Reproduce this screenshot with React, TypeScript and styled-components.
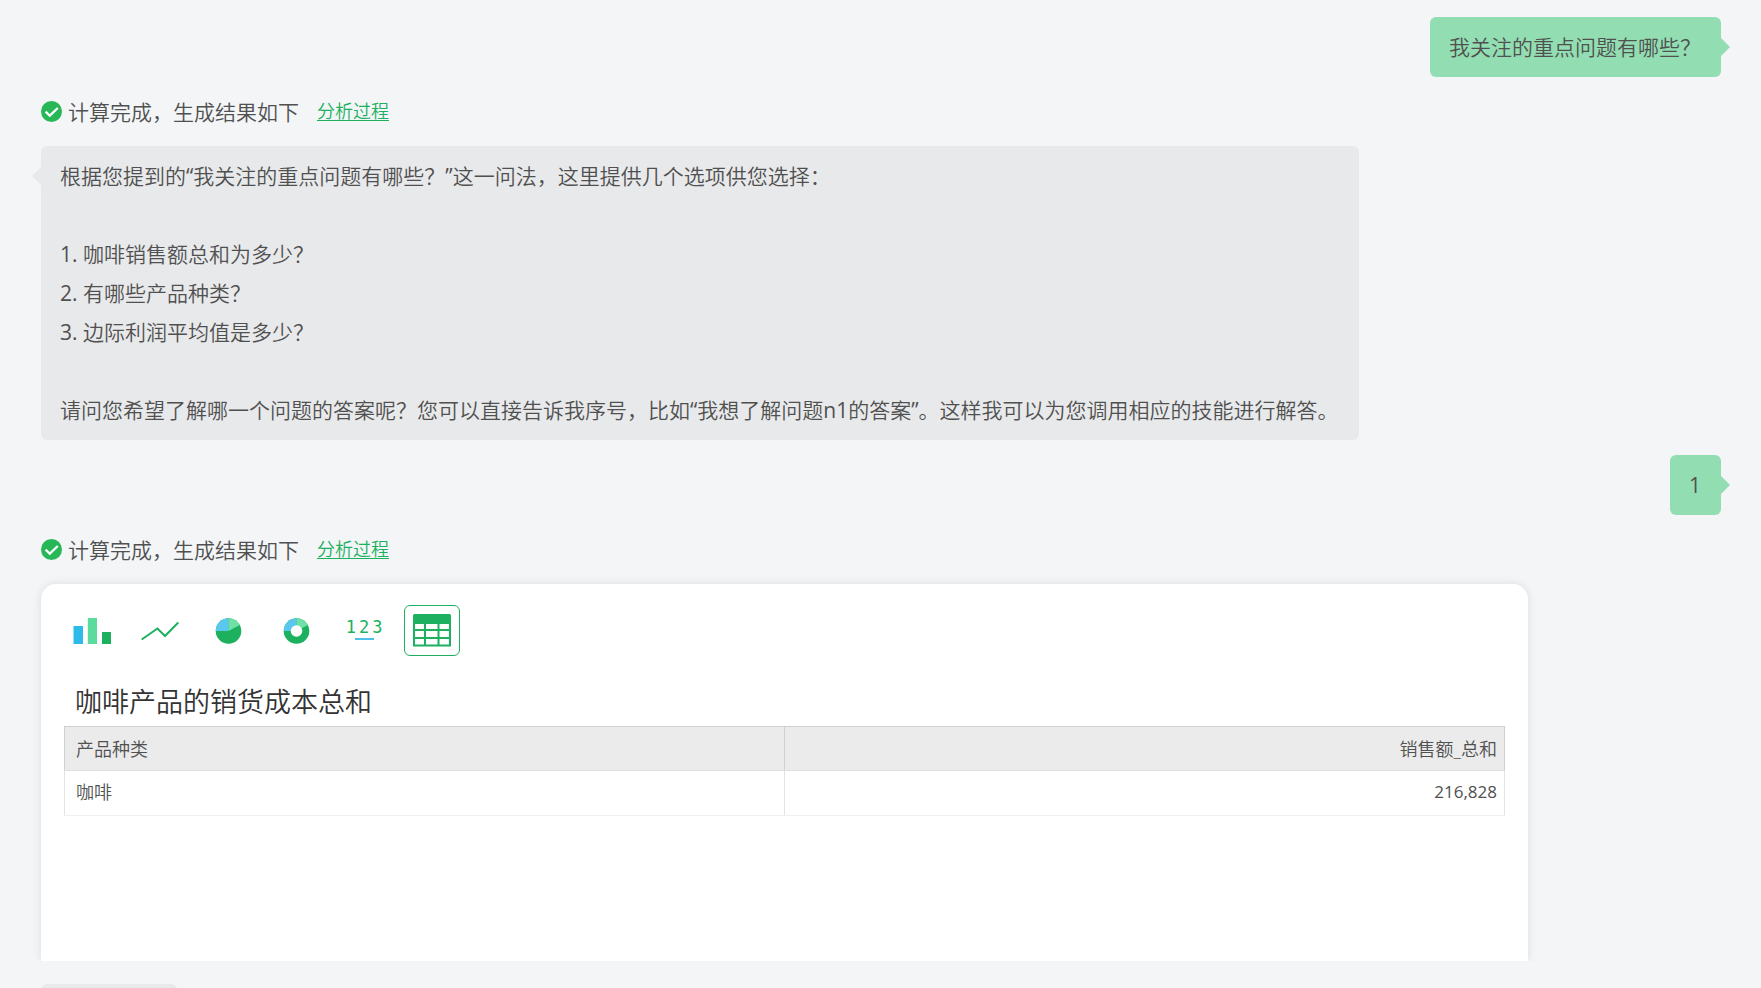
import React from "react";
import styled, { createGlobalStyle } from "styled-components";

const GlobalStyle = createGlobalStyle`
  * { box-sizing: border-box; }
  body {
    margin: 0;
    background: #f3f5f7;
    color: #505050;
    font-family: "Open Sans", "Noto Sans CJK SC", sans-serif;
    font-weight: 350;
    font-size: 21px;
  }
`;

const Page = styled.main`
  display: flex;
  flex-direction: column;
  height: 100vh;
  overflow: hidden;
  padding: 17px 40px 0 41px;
`;

const Bubble = styled.div<{ $side: "user" | "bot" }>`
  position: relative;
  flex: none;
  align-self: ${(p) => (p.$side === "user" ? "flex-end" : "flex-start")};
  padding: ${(p) => (p.$side === "user" ? "11px 20px 10px 19px" : "11px 20px 10px 19px")};
  line-height: 39px;
  border-radius: 6px;
  background: ${(p) => (p.$side === "user" ? "#92deb2" : "#e8e9eb")};

  &::after {
    content: "";
    position: absolute;
    top: 21px;
    ${(p) => (p.$side === "user" ? "left: 100%" : "right: 100%")};
    border: 9px solid transparent;
    border-width: ${(p) => (p.$side === "user" ? "9px 0 9px 9px" : "9px 9px 9px 0")};
    ${(p) =>
      p.$side === "user"
        ? "border-left-color: #92deb2"
        : "border-right-color: #e8e9eb"};
  }
`;

const Latin = styled.span`
  font-weight: 400;
`;

const Line = styled.p`
  margin: 0;
`;

const Options = styled.ol`
  list-style: none;
  margin: 39px 0;
  padding: 0;
`;

const StatusRow = styled.div`
  display: flex;
  align-items: center;
  flex: none;
  height: 69px;
`;

const StatusText = styled.span`
  margin: 0 18px 0 6px;
  padding-bottom: 2px;
`;

const ProcessLink = styled.a`
  padding-bottom: 4px;
  font-size: 18px;
  color: #1db15f;
  text-decoration: underline;
  text-underline-offset: 2px;
`;

const Card = styled.section`
  flex: none;
  height: 377px;
  margin-right: 193px;
  padding: 21px 23px 0;
  background: #fff;
  border-radius: 15px 15px 0 0;
  box-shadow: 0 0 10px rgba(0, 0, 0, 0.1);
  clip-path: inset(-10px -10px 0 -10px);
`;

const Toolbar = styled.div`
  display: flex;
  gap: 12px;
`;

const ChartButton = styled.button<{ $active?: boolean }>`
  display: flex;
  align-items: center;
  justify-content: center;
  width: 56px;
  height: 51px;
  padding: 0;
  background: #fff;
  border: 1px solid ${(p) => (p.$active ? "#1db15f" : "transparent")};
  border-radius: 6px;
`;

const NumberCard = styled.span`
  display: flex;
  flex-direction: column;
  align-items: center;
  gap: 1px;
  padding-bottom: 4px;
  color: #1db15f;
  font: 400 17px/20px "DejaVu Sans Mono", monospace;
`;

const Digits = styled.span`
  display: flex;
  gap: 3px;
`;

const Underline = styled.span`
  width: 19px;
  height: 2px;
  background: #4fc0e8;
`;

const Title = styled.h2`
  margin: 26px 0 4px 11px;
  color: #333;
  font-size: 27px;
  font-weight: 350;
  line-height: 40px;
`;

const DataTable = styled.table`
  width: 100%;
  table-layout: fixed;
  border-collapse: collapse;
  font-size: 18px;
  line-height: 26px;
`;

const HeadCell = styled.th<{ $right?: boolean }>`
  height: 44px;
  padding: 0 7px 0 11px;
  background: #ebebeb;
  border: 1px solid #cfcfcf;
  border-bottom-color: #e0e0e0;
  font-weight: 350;
  text-align: ${(p) => (p.$right ? "right" : "left")};
`;

const Cell = styled.td<{ $numeric?: boolean }>`
  height: 45px;
  padding: 0 7px 2px 11px;
  border: 1px solid #e3e3e3;
  border-bottom-color: #f0f0f0;
  ${(p) => p.$numeric && "text-align: right; font-size: 17px; font-weight: 400;"}
`;

const NextBubble = styled.div`
  flex: none;
  width: 136px;
  height: 60px;
  margin-top: 23px;
  border-radius: 6px;
  background: #e8e9eb;
`;

const Spacer = styled.div`
  flex: none;
  height: 15px;
`;

const CheckIcon = () => (
  <svg width="21" height="21" viewBox="0 0 21 21" aria-hidden="true">
    <circle cx="10.5" cy="10.5" r="10.5" fill="#27b757" />
    <path d="M4.6 10.6 8.8 14.7 16.8 7" fill="none" stroke="#fff" strokeWidth="2.3" />
  </svg>
);

const Status = () => (
  <StatusRow>
    <CheckIcon />
    <StatusText>计算完成，生成结果如下</StatusText>
    <ProcessLink href="#process">分析过程</ProcessLink>
  </StatusRow>
);

const BarIcon = () => (
  <svg width="38" height="26" viewBox="0 0 38 26">
    <path d="M.5 8H10v18H.5z" fill="#2fbbea" />
    <path d="M14.8 0H24v26h-9.200z" fill="#5cdc9c" />
    <path d="M29 14h9v12h-9z" fill="#1db15f" />
  </svg>
);

const LineIcon = () => (
  <svg width="38" height="26" viewBox="0 0 38 26">
    <path d="M.7 21.5 16.5 10.5 24 18 37.3 4.5" fill="none" stroke="#1db15f" strokeWidth="2" />
  </svg>
);

const PieIcon = ({ hole = false }: { hole?: boolean }) => (
  <svg width="28" height="26" viewBox="-1.5 0 28 26">
    <circle cx="13" cy="13" r="12.8" fill="#1db15f" />
    <path d="M13 13H.2A12.8 12.8 0 0 1 13 .2z" fill="#5ac8ee" />
    <path d="M13 13V.2A12.8 12.8 0 0 1 24.3 7z" fill="#6fe0a8" />
    {hole && <circle cx="13" cy="13" r="5.8" fill="#fff" />}
  </svg>
);

const NumberIcon = () => (
  <NumberCard>
    <Digits>
      <span>1</span>
      <span>2</span>
      <span>3</span>
    </Digits>
    <Underline />
  </NumberCard>
);

const TableIcon = () => (
  <svg width="38" height="33" viewBox="0 0 38 33">
    <path
      fill="#1db15f"
      fillRule="evenodd"
      d="M1.5 0h35A1.5 1.5 0 0 1 38 1.5V32.500H0V1.5A1.5 1.5 0 0 1 1.5 0zM2 10v5h9v-5zm11 0v5h11.500v-5zm13.500 0v5H36v-5zM2 17v6h9v-6zm11 0v6h11.500v-6zm13.500 0v6H36v-6zM2 25v5.500h9V25zm11 0v5.500h11.500V25zm13.500 0v5.500H36V25z"
    />
  </svg>
);

const charts = [
  { name: "柱状图", icon: <BarIcon /> },
  { name: "折线图", icon: <LineIcon /> },
  { name: "饼图", icon: <PieIcon /> },
  { name: "环形图", icon: <PieIcon hole /> },
  { name: "指标卡", icon: <NumberIcon /> },
  { name: "表格", icon: <TableIcon />, active: true },
];

const options = ["咖啡销售额总和为多少？", "有哪些产品种类？", "边际利润平均值是多少？"];

export default function App() {
  return (
    <>
      <GlobalStyle />
      <Page lang="zh-CN">
        <Bubble $side="user">我关注的重点问题有哪些？</Bubble>
        <Status />
        <Bubble $side="bot">
          <Line>
            根据您提到的<Latin>“</Latin>我关注的重点问题有哪些？<Latin>”</Latin>
            这一问法，这里提供几个选项供您选择：
          </Line>
          <Options>
            {options.map((text, i) => (
              <li key={text}>
                <Latin>{i + 1}. </Latin>
                {text}
              </li>
            ))}
          </Options>
          <Line>
            请问您希望了解哪一个问题的答案呢？您可以直接告诉我序号，比如<Latin>“</Latin>我想了解问题
            <Latin>n1</Latin>的答案<Latin>”</Latin>。这样我可以为您调用相应的技能进行解答。
          </Line>
        </Bubble>
        <Spacer />
        <Bubble $side="user">
          <Latin>1</Latin>
        </Bubble>
        <Status />
        <Card>
          <Toolbar>
            {charts.map((c) => (
              <ChartButton key={c.name} type="button" aria-label={c.name} $active={c.active}>
                {c.icon}
              </ChartButton>
            ))}
          </Toolbar>
          <Title>咖啡产品的销货成本总和</Title>
          <DataTable>
            <thead>
              <tr>
                <HeadCell scope="col">产品种类</HeadCell>
                <HeadCell scope="col" $right>销售额_总和</HeadCell>
              </tr>
            </thead>
            <tbody>
              <tr>
                <Cell>咖啡</Cell>
                <Cell $numeric>216,828</Cell>
              </tr>
            </tbody>
          </DataTable>
        </Card>
        <NextBubble />
      </Page>
    </>
  );
}
